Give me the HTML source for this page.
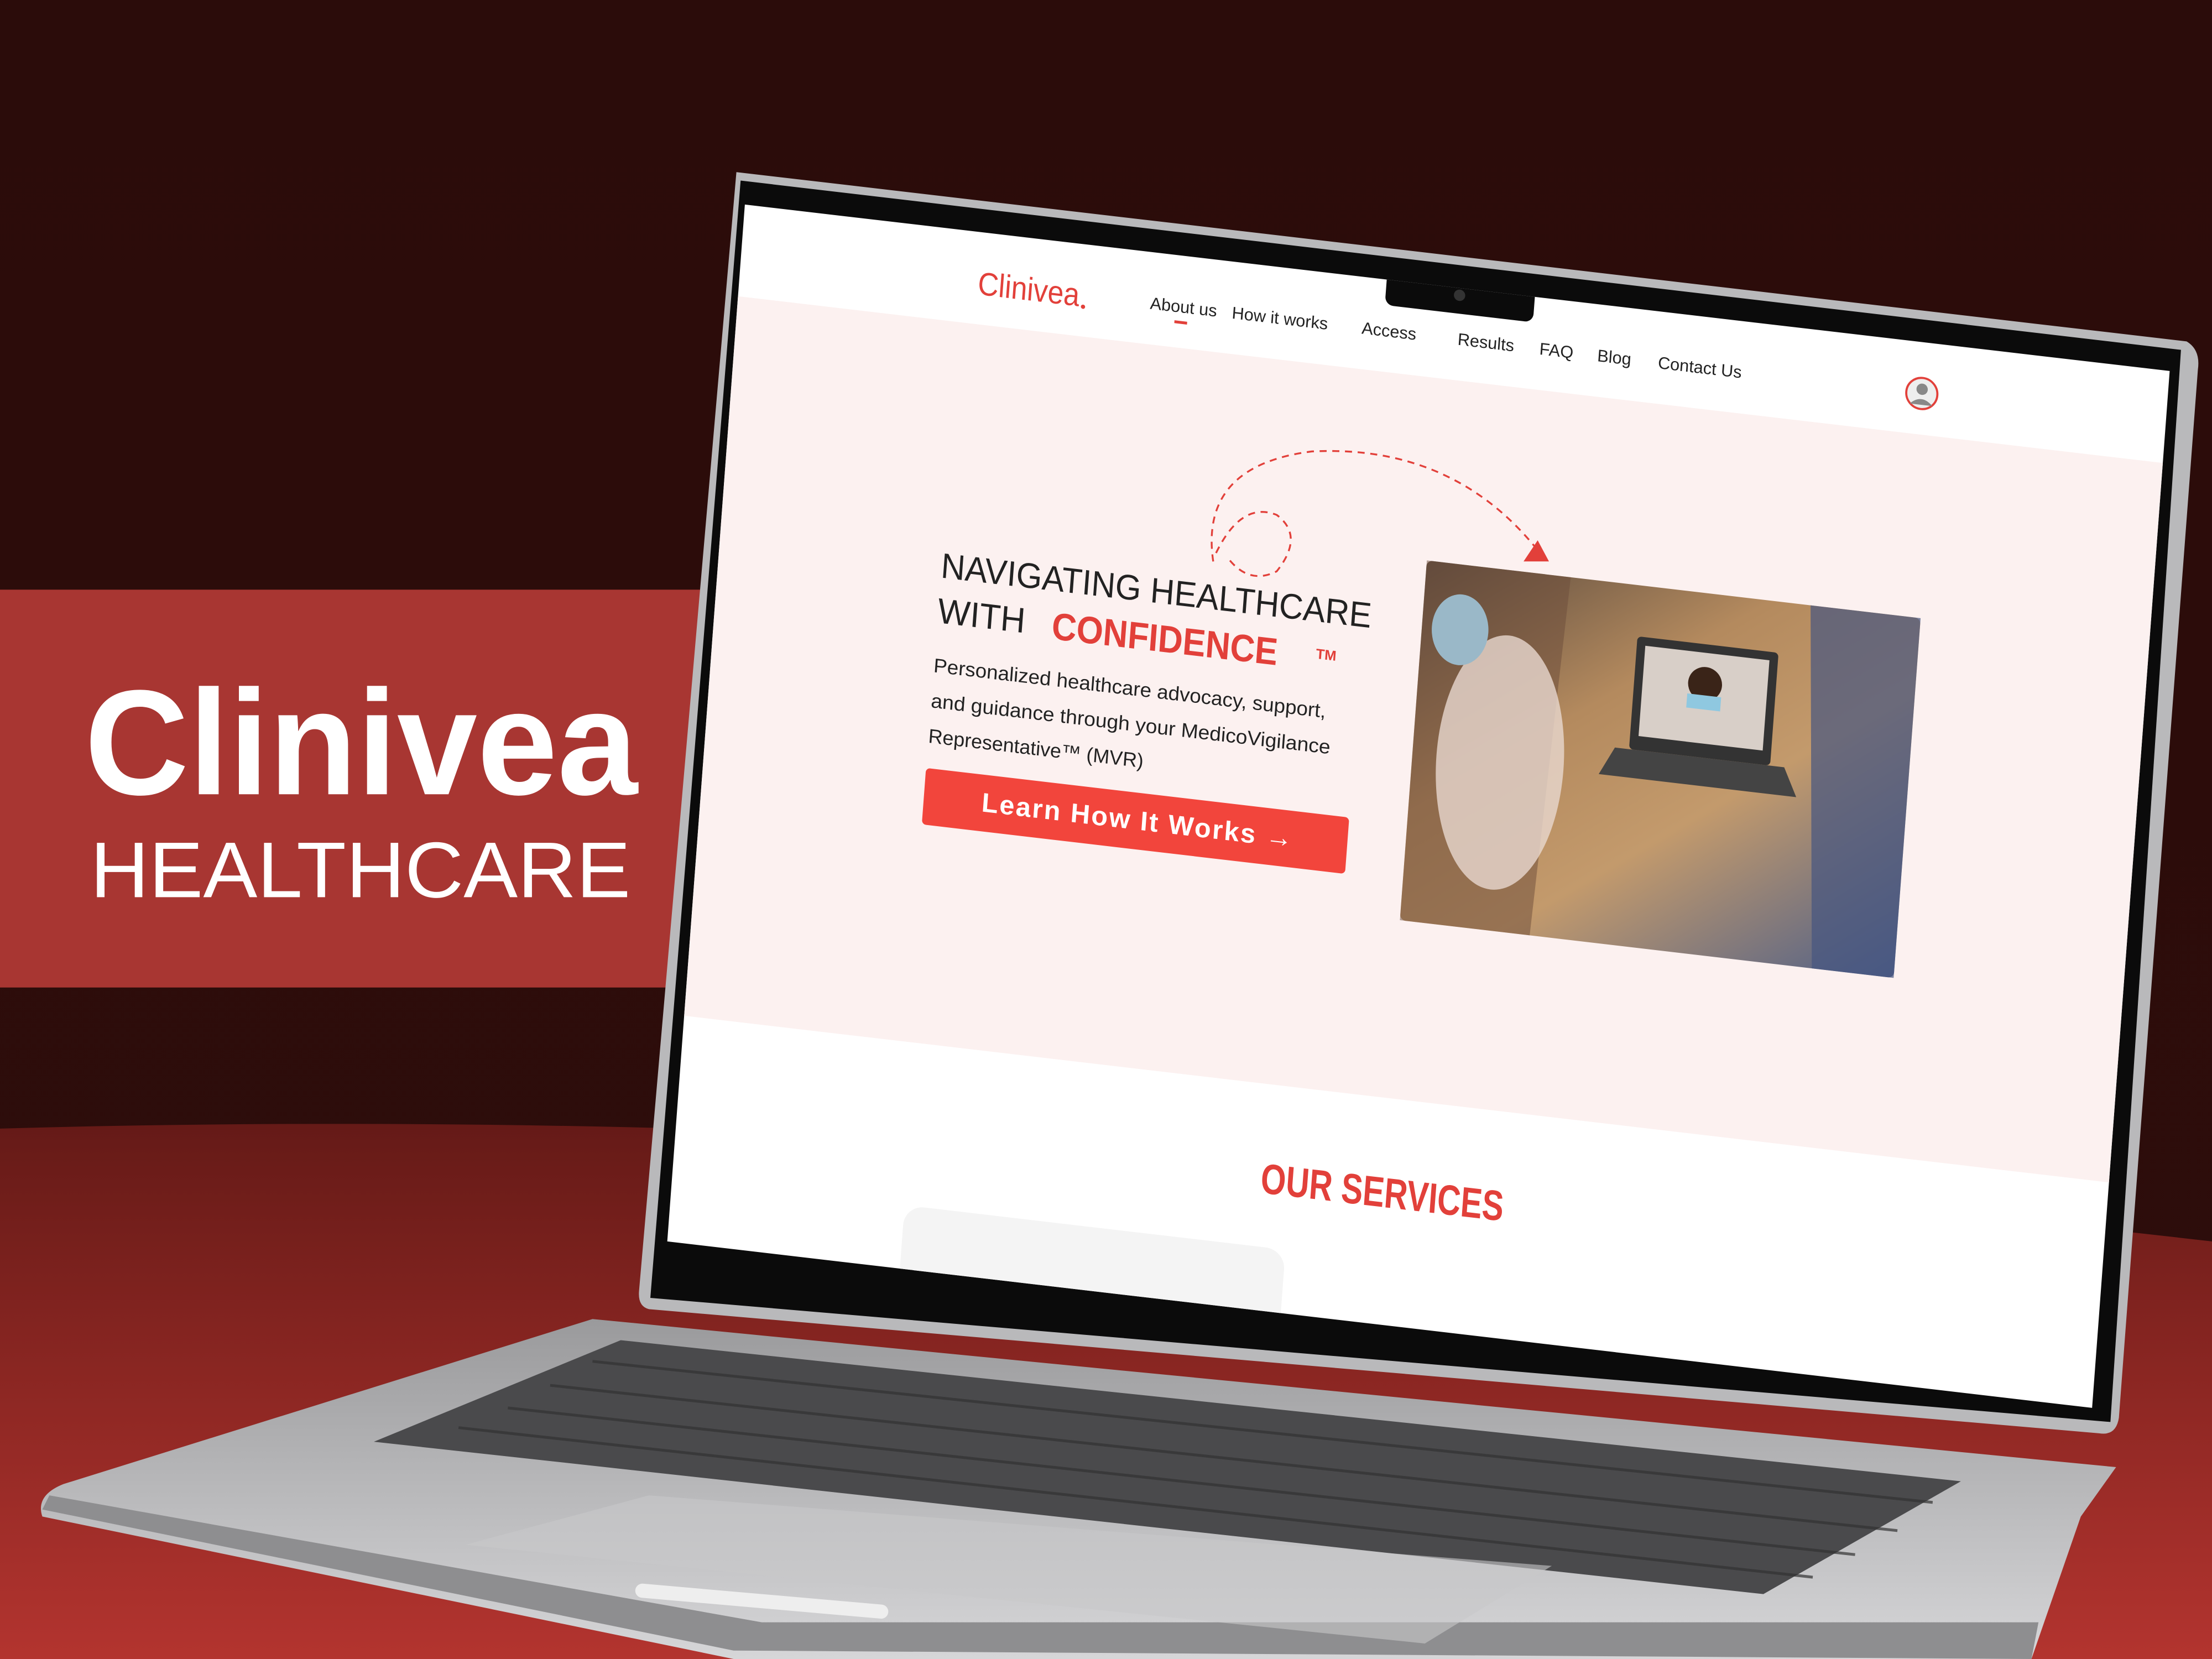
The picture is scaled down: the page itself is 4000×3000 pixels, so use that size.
<!DOCTYPE html>
<html><head><meta charset="utf-8"><style>
html,body{margin:0;padding:0;background:#2a0c0a;}
svg{display:block;}
text{font-family:"Liberation Sans",sans-serif;}
</style></head><body>
<svg width="4000" height="3000" viewBox="0 0 1568 1176" preserveAspectRatio="none" xmlns="http://www.w3.org/2000/svg">
<defs>
<linearGradient id="bg" x1="0" y1="0" x2="0" y2="1">
<stop offset="0" stop-color="#2b0c0a"/><stop offset="1" stop-color="#2e0d0b"/></linearGradient>
<linearGradient id="floor" x1="0" y1="0" x2="0" y2="1">
<stop offset="0" stop-color="#651a17"/><stop offset="0.5" stop-color="#8d2723"/><stop offset="1" stop-color="#b3342f"/></linearGradient>
<linearGradient id="base" x1="0" y1="0" x2="0" y2="1">
<stop offset="0" stop-color="#9a9a9c"/><stop offset="1" stop-color="#d6d6d8"/></linearGradient>
<linearGradient id="photo" x1="0" y1="0" x2="1" y2="1">
<stop offset="0" stop-color="#5a4a3e"/><stop offset="0.35" stop-color="#b48a5e"/><stop offset="0.6" stop-color="#c39a6c"/><stop offset="1" stop-color="#4e5f88"/></linearGradient>
<clipPath id="scr"><path d="M528 145 L1538 263 L1483 998 L473 880 Z"/></clipPath>
</defs>
<rect width="1568" height="1176" fill="url(#bg)"/>
<path d="M0 800 Q700 780 1568 880 L1568 1176 L0 1176Z" fill="url(#floor)"/>
<rect x="0" y="418" width="520" height="282" fill="#a83632"/>
<text x="60" y="563" font-size="106" font-weight="bold" fill="#fff" textLength="392" lengthAdjust="spacingAndGlyphs">Clinivea</text>
<text x="64" y="636" font-size="56" fill="#fff" textLength="383" lengthAdjust="spacingAndGlyphs">HEALTHCARE</text>

<!-- base -->
<path d="M420 935 L1500 1040 L1475 1075 L1440 1176 L520 1176 L30 1075 Q25 1060 45 1052 Z" fill="url(#base)"/>
<path d="M30 1070 L520 1170 L1440 1176 L1445 1150 L540 1150 L35 1060Z" fill="#8e8e90"/>
<path d="M440 950 L1390 1050 L1250 1130 L265 1022 Z" fill="#4a4a4c"/>
<g stroke="#333" stroke-width="2" opacity="0.7">
<path d="M420 965 L1370 1065"/><path d="M390 982 L1345 1085"/><path d="M360 998 L1315 1102"/><path d="M325 1012 L1285 1118"/>
</g>
<path d="M330 1095 L1010 1165 L1100 1110 L460 1060Z" fill="#c8c8ca" opacity="0.6"/>
<rect x="450" y="1130" width="180" height="10" rx="5" fill="#eee" transform="rotate(5 540 1135)"/>

<!-- lid -->
<path d="M522 122 L1550 242 Q1560 248 1558 262 L1502 1005 Q1500 1018 1488 1016 L460 928 Q452 926 453 915 Z" fill="#b9b9bb"/>
<path d="M525 128 L1546 248 L1496 1008 L461 920 Z" fill="#0b0b0b"/>
<path d="M528 145 L1538 263 L1483 998 L473 880 Z" fill="#ffffff"/>

<g clip-path="url(#scr)">
<g transform="matrix(1,0.117,-0.075,1,528,145)">
<rect x="-20" y="65" width="1050" height="510" fill="#fcf1f0"/>
<rect x="165" y="690" width="270" height="80" rx="14" fill="#f4f4f4"/>
<rect x="455" y="-10" width="105" height="28" rx="6" fill="#0b0b0b"/>
<circle cx="507" cy="5" r="4" fill="#333"/>
<text x="168" y="44" font-size="23" fill="#e2403a" textLength="72" lengthAdjust="spacingAndGlyphs">Clinivea</text>
<circle cx="243" cy="44" r="1.5" fill="#e2403a"/>
<g font-size="12" fill="#222">
<text x="290" y="40">About us</text>
<text x="348" y="40">How it works</text>
<text x="440" y="40">Access</text>
<text x="508" y="40">Results</text>
<text x="566" y="40">FAQ</text>
<text x="607" y="40">Blog</text>
<text x="650" y="40">Contact Us</text>
</g>
<rect x="308" y="46" width="9" height="2" fill="#e2403a"/>
<circle cx="837" cy="36" r="11" fill="#eee" stroke="#e2403a" stroke-width="1.5"/>
<circle cx="837" cy="33" r="4" fill="#888"/><path d="M829 44 Q837 36 845 44Z" fill="#888"/>

<text x="157" y="246" font-size="25" fill="#222" textLength="305" lengthAdjust="spacingAndGlyphs">NAVIGATING HEALTHCARE</text>
<text x="157" y="278" font-size="25" fill="#222" textLength="62" lengthAdjust="spacingAndGlyphs">WITH</text>
<text x="238" y="280" font-size="27" font-weight="bold" fill="#e2403a" textLength="160" lengthAdjust="spacingAndGlyphs">CONFIDENCE</text>
<text x="425" y="272" font-size="10" font-weight="bold" fill="#e2403a">TM</text>
<g font-size="14" fill="#222">
<text x="157" y="313" textLength="278" lengthAdjust="spacingAndGlyphs">Personalized healthcare advocacy, support,</text>
<text x="157" y="338" textLength="283" lengthAdjust="spacingAndGlyphs">and guidance through your MedicoVigilance</text>
<text x="157" y="363">Representative™ (MVR)</text>
</g>
<rect x="157" y="381" width="300" height="40" rx="3" fill="#f2453c"/>
<text x="198" y="407" font-size="19" font-weight="bold" fill="#fff" letter-spacing="1">Learn How It Works →</text>

<rect x="498" y="194" width="350" height="255" rx="4" fill="url(#photo)"/>
<path d="M498 194 L600 194 L590 449 L498 449Z" fill="#6c4b3a" opacity="0.5"/>
<ellipse cx="560" cy="330" rx="45" ry="90" fill="#e8d8d0" opacity="0.8"/>
<ellipse cx="525" cy="240" rx="20" ry="25" fill="#9ab8c8"/>
<rect x="650" y="230" width="100" height="80" rx="3" fill="#333"/>
<rect x="656" y="236" width="88" height="64" fill="#d8cfc8"/>
<circle cx="700" cy="258" r="12" fill="#3a2418"/><rect x="688" y="266" width="24" height="10" fill="#8fc8e0"/>
<path d="M640 310 L760 310 L770 330 L630 330Z" fill="#444"/>
<path d="M770 194 L848 194 L848 449 L790 449Z" fill="#465580" opacity="0.7"/>

<text x="500" y="652" font-size="30" font-weight="bold" fill="#e2403a" text-anchor="middle" textLength="172" lengthAdjust="spacingAndGlyphs">OUR SERVICES</text>
</g>
</g>

<path d="M860 398 Q850 330 930 320 Q1030 315 1090 390" fill="none" stroke="#e2403a" stroke-width="1.3" stroke-dasharray="5 4"/>
<path d="M862 392 Q880 355 905 365 Q925 380 905 405 Q885 415 870 395" fill="none" stroke="#e2403a" stroke-width="1.3" stroke-dasharray="5 4"/>
<path d="M1080 398 L1098 398 L1090 383Z" fill="#e2403a"/>
</svg>
</body></html>
